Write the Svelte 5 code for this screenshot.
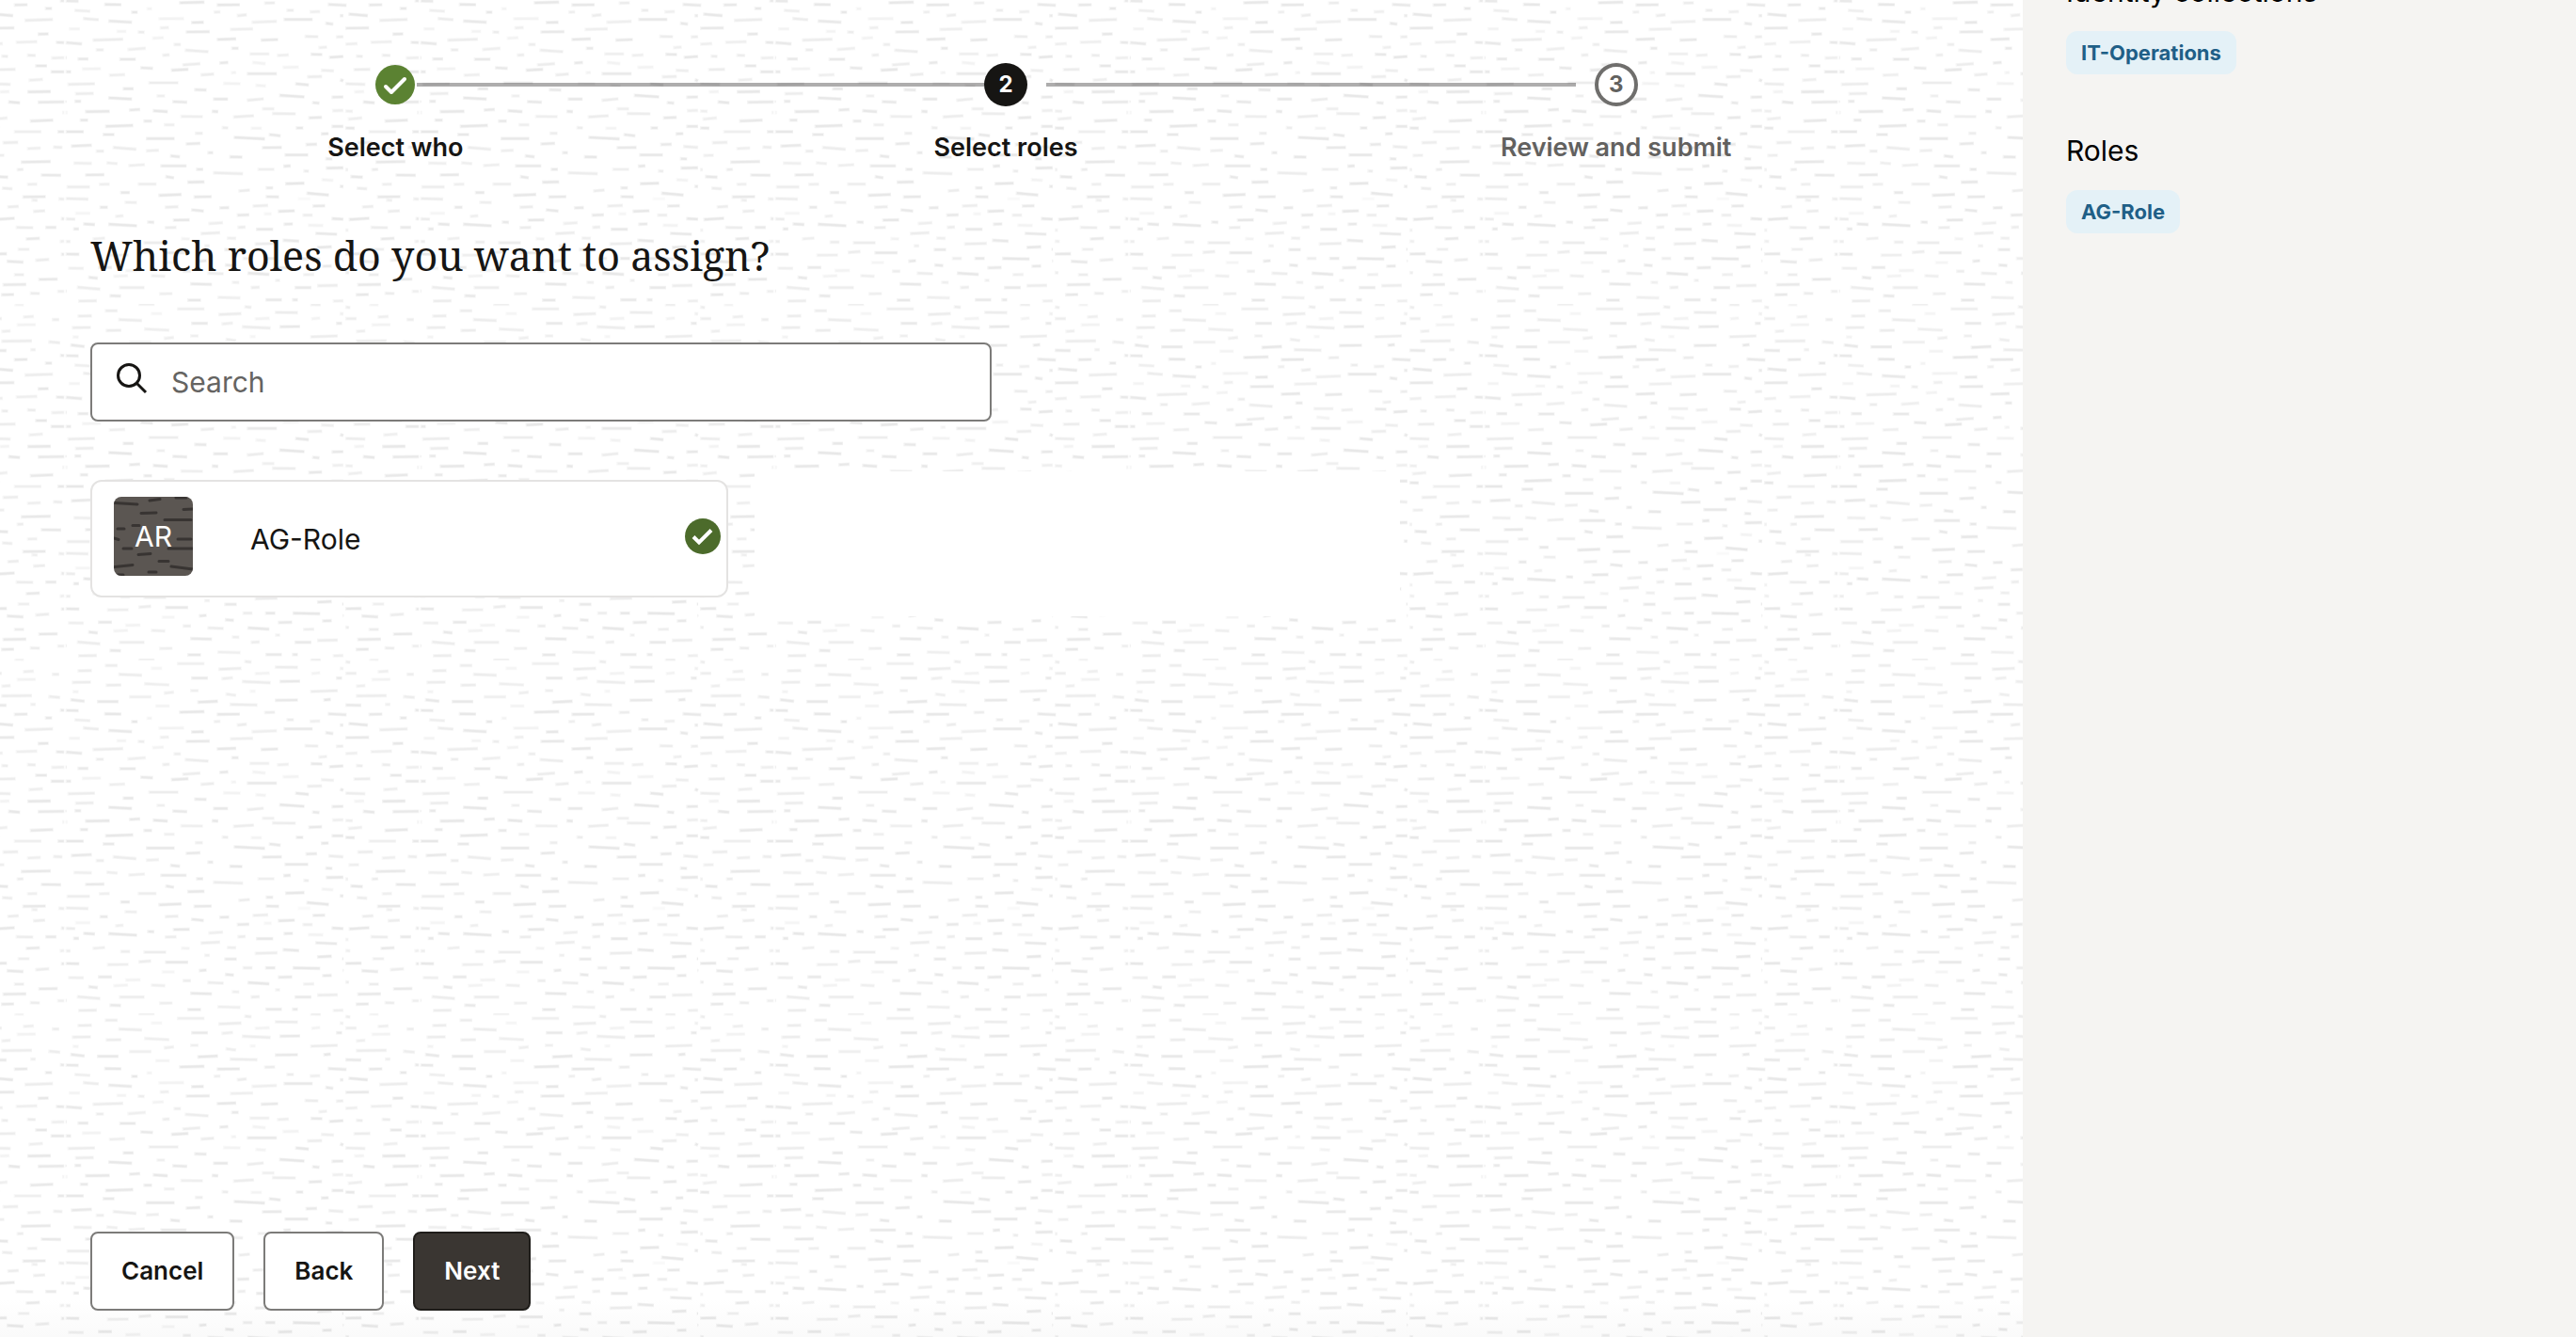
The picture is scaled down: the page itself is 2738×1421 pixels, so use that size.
<script lang="ts">
  type Dash = [number, number, number, number, number];

  // One tile of the woven backdrop, in thirds of a pixel:
  // start x, start y, end x, end y, strength (0-9)
  const tile = 1131;
  const rows: string[] = [
    '125,22,170,22,6 355,16,447,16,5 272,31,312,31,3 487,34,565,31,6 570,9,597,11,6 667,27,745,28,6 780,2,818,3,5 892,10,912,12,6 968,2,1002,3,4 232,1,288,1,5',
    '38,39,88,38,6 168,50,248,53,6 20,76,85,75,6 603,48,655,46,4 783,48,816,45,4 874,31,890,32,5 892,47,932,47,6 995,42,1034,40,5 1087,50,1115,50,6 400,62,458,62,7 497,64,538,61,5 862,62,886,62,7 975,67,1040,66,4',
    '128,85,182,84,6 250,80,335,84,5 562,73,658,77,6 682,73,752,72,7 926,88,960,86,5 22,105,46,106,4 313,110,350,107,5 397,102,428,102,5 587,104,610,104,3 780,105,872,102,6 510,113,548,117,5 926,119,1028,118,6 1076,121,1118,124,6',
    '202,122,278,122,5 15,131,65,136,7 100,137,173,137,8 286,151,336,151,4 420,139,490,136,8 523,146,616,148,6 667,133,745,132,7 822,132,850,130,8 1018,146,1040,146,5 892,148,947,149,7',
    '0,165,46,166,7 123,176,182,177,8 362,171,447,169,8 482,178,560,177,8 633,172,672,171,6 836,176,900,179,7 966,178,1014,177,7 1113,164,1131,165,7 258,190,280,190,4 28,195,83,198,5 209,201,234,201,8 472,201,498,200,5 704,195,732,195,6 778,200,816,199,5 1065,189,1092,189,7',
    '55,221,110,225,6 296,222,382,221,4 546,212,582,209,6 874,212,890,212,7 902,207,968,212,8 695,224,792,224,8 1000,227,1095,224,6 136,229,216,233,7 400,234,445,233,8 593,233,678,230,5 828,236,858,239,7',
    '10,254,50,254,4 300,251,334,250,5 524,256,602,254,5 892,252,972,251,7 162,262,198,262,4 230,264,256,265,6 383,264,464,263,7 1042,271,1081,270,8',
    '86,290,188,287,6 276,284,317,282,4 482,288,548,286,8 622,290,682,288,7 762,278,810,279,6 862,280,890,279,6 0,298,57,302,7 344,304,372,304,6 972,297,1045,295,5 892,303,935,301,5 1100,297,1131,298,7',
    '96,321,126,321,6 197,320,260,316,5 380,322,460,327,6 528,316,556,316,7 806,314,838,312,5 308,338,336,337,6 586,334,654,334,5 674,339,716,337,5 781,335,823,336,7 840,345,890,342,8 926,341,952,342,6 1008,338,1040,339,6 1085,347,1131,346,5',
    '0,346,8,346,6 38,350,77,350,7 171,351,228,351,7 372,369,434,365,6 490,363,523,361,7 595,361,642,365,4 692,377,748,376,4 1034,372,1076,372,8 52,382,117,381,4 238,378,283,380,7 336,386,396,383,8 814,386,860,388,5 918,384,976,383,6 0,391,22,391,7 1083,391,1131,391,8',
    '138,402,194,400,5 430,401,478,398,6 527,394,548,393,4 578,397,678,397,7 770,407,822,406,6 875,416,890,420,8 1013,418,1063,415,5 6,431,98,429,6 264,426,364,426,6 502,428,562,429,4 605,434,643,436,4 732,429,780,433,8 892,429,960,431,6',
    '182,445,221,445,8 410,448,454,449,7 920,455,956,454,4 1009,455,1088,454,8 30,461,94,460,6 290,468,321,468,5 136,474,216,478,8 470,478,522,478,8 578,482,636,477,6 681,466,766,471,8 848,472,890,471,7',
    '28,485,54,485,7 340,486,392,488,7 786,489,814,491,7 948,487,990,490,8 1042,488,1131,487,7 0,486,6,486,6 626,509,670,509,5 62,518,145,517,8 202,513,242,511,7 278,515,330,518,8 466,517,491,518,8 850,515,890,514,5 892,516,920,517,5 0,521,10,521,5 1120,521,1131,521,5',
    '658,524,738,525,6 366,533,442,534,5 534,535,605,531,6 774,538,822,536,7 900,542,950,538,5 45,545,76,545,7 248,548,280,548,7 1017,548,1096,545,7 313,560,352,560,5 126,565,220,562,8 848,565,890,565,8 892,570,926,571,8',
    '498,569,523,570,6 590,571,630,571,4 734,570,762,570,8 0,582,62,582,8 966,582,1058,582,5 1105,582,1131,582,7 118,591,160,591,7 412,587,442,587,6 648,591,690,595,7 814,589,843,588,8',
    '256,604,352,604,8 536,600,640,605,8 383,621,434,619,7 930,617,984,616,6 17,628,88,625,7 626,633,694,632,7 765,623,806,622,7 838,629,890,632,6 150,632,230,638,6 1008,636,1056,634,5 1091,631,1125,632,6 256,643,302,641,5 96,644,127,644,6 452,649,475,649,7',
    '333,659,369,662,7 522,662,568,663,8 698,656,778,656,8 828,668,855,669,7 902,658,940,657,5 25,682,88,683,5 130,681,170,684,5 200,690,257,687,5 302,691,390,691,7 988,679,1088,677,7 694,692,722,691,8',
    '416,702,443,702,7 612,702,670,702,5 830,698,890,697,8 892,703,905,703,6 975,703,1001,702,6 758,707,780,708,6 470,713,570,716,6 62,720,128,719,7 318,725,350,729,7 908,725,952,727,8 1052,720,1121,721,7 816,735,858,737,4',
    '388,743,447,742,8 106,750,145,749,5 230,749,294,749,6 700,748,766,746,8 1008,750,1045,749,5 3,758,82,758,6 638,761,666,761,7 874,756,890,757,8 928,762,966,764,6 551,771,592,768,6 174,776,209,776,8',
    '296,785,374,782,8 768,778,844,784,8 408,790,470,789,7 638,789,685,790,7 993,790,1072,789,7 0,795,77,797,6 740,796,785,796,2 1108,796,1131,797,6 188,807,232,808,5 1022,800,1046,801,5 108,823,139,823,7 316,823,364,821,6 596,819,650,817,6 787,819,832,818,7 490,825,526,824,7 945,822,986,820,6',
    '400,831,445,835,7 677,836,735,834,8 1027,836,1070,834,6 546,848,590,847,7 632,844,661,844,3 755,848,792,848,6 30,842,83,842,3 158,852,189,850,5 0,860,35,861,6 342,864,400,863,8 848,859,890,861,8 903,862,973,858,8 1116,859,1131,860,7',
    '56,876,98,878,8 260,870,287,871,7 455,875,506,872,5 695,877,729,876,7 136,877,232,882,8 773,880,826,881,4 316,888,358,887,6 548,887,578,886,6 24,892,47,892,8 607,893,666,893,8 972,887,1032,888,6 1066,887,1106,887,7 892,896,906,896,5',
    '430,907,497,904,6 796,906,870,909,7 86,924,130,921,5 368,923,400,924,4 514,921,548,922,5 1004,924,1053,922,7 0,932,20,932,6 692,928,749,931,7 174,934,210,934,6 248,936,325,936,6 892,931,912,932,5 1112,932,1131,931,5 603,940,680,938,6 442,946,464,946,5 802,951,853,949,8',
    '506,958,550,958,7 882,957,890,957,8 978,957,1020,957,5 232,967,277,964,6 0,972,48,973,8 317,968,395,968,8 892,972,948,971,8 1116,973,1131,973,8 132,976,205,975,5 564,986,600,986,6 636,986,673,986,8 724,986,816,988,8 425,995,454,993,7 306,999,352,999,3 884,994,890,994,6 943,995,1001,998,7 1034,992,1083,989,6',
    '508,1007,541,1009,7 818,1011,853,1010,7 8,1017,62,1018,5 103,1015,152,1015,7 677,1016,727,1015,7 190,1025,243,1024,4 373,1027,404,1027,6 892,1031,908,1032,6 452,1033,508,1035,6 580,1033,654,1037,8 757,1038,797,1037,5 966,1038,1003,1038,6 272,1041,322,1043,5 152,1043,203,1041,4 72,1046,107,1049,7',
    '1044,1053,1110,1052,7 530,1062,558,1063,5 668,1056,688,1056,5 397,1067,471,1069,7 802,1073,872,1072,6 930,1070,1010,1069,7 36,1078,115,1084,6 170,1079,256,1079,6 590,1079,623,1078,6 730,1079,788,1079,7 0,1090,8,1090,5 298,1099,345,1098,5 1104,1091,1131,1091,5',
    '140,1105,181,1106,7 484,1110,562,1112,5 925,1102,971,1101,7 1017,1097,1053,1098,6 388,1119,436,1119,7 637,1118,694,1118,7 722,1118,745,1118,7 40,1122,104,1121,6 852,1122,890,1121,5',
  ];
  const dashes: Dash[] = rows.flatMap((r) => r.split(' ').map((d) => d.split(',').map(Number) as Dash));

  let search = $state('');
  let picked = $state(true);
</script>

<svelte:head><title>Assign roles</title></svelte:head>

<div class="app">
  <main>
    <svg class="weave" aria-hidden="true">
      <defs>
        <pattern id="weave" x="1200" y="323" width="377" height="377" patternUnits="userSpaceOnUse" viewBox="0 0 {tile} {tile}">
          {#each dashes as [x1, y1, x2, y2, o]}
            <path d="M{x1 + 2} {y1}L{x2 - 2} {y2}" stroke="#000" stroke-opacity={o * 0.006} stroke-width="11" />
            <path d="M{x1 + 6} {y1}L{x2 - 4} {y2}" stroke="#000" stroke-opacity={o * 0.006} stroke-width="6" />
          {/each}
        </pattern>
      </defs>
      <rect width="100%" height="100%" fill="url(#weave)" />
    </svg>

    <ol class="train">
      <li class="done">
        <span class="dot">
          <svg viewBox="0 0 42 42" aria-hidden="true"><path d="M11 23L17 29L31 15" /></svg>
        </span>
        <span class="label">Select who</span>
      </li>
      <li class="current" aria-current="step">
        <span class="dot">2</span>
        <span class="label">Select roles</span>
      </li>
      <li class="todo">
        <span class="dot">3</span>
        <span class="label">Review and submit</span>
      </li>
    </ol>

    <h1>Which roles do you want to assign?</h1>

    <label class="search">
      <svg viewBox="0 0 34 34" aria-hidden="true"><circle cx="13" cy="14" r="11.5" /><path d="M21 22L31 32" /></svg>
      <input type="text" placeholder="Search" aria-label="Search" bind:value={search} />
    </label>

    <ul class="cards">
      <li>
        <button class="card" aria-pressed={picked} onclick={() => (picked = !picked)}>
          <span class="avatar">
            <svg viewBox="0 0 84 84" aria-hidden="true">
              <path d="M1 6.500L25 8M38 4L49 2.500M66 1H77M74 13.500L84 13M29 17.500L45 17M54 24.500H82M20 30.500H27M4 34H11M0 44L5 45.500M68 45H82M10 55H19M58 55H84M26 61.500L39 60.500M48 68.500H58M1 74.500L20 72.500M61 74L84 77M37 80H45M4 83H10" />
            </svg>
            <span>AR</span>
          </span>
          <span class="name">AG-Role</span>
          {#if picked}
            <svg class="tick" viewBox="0 0 38 38" aria-hidden="true"><circle cx="19" cy="19" r="19" /><path d="M9 19.500L15 25.500L28 12.500" /></svg>
          {/if}
        </button>
      </li>
      <li class="blank"></li>
    </ul>

    <footer>
      <button>Cancel</button>
      <button>Back</button>
      <button class="primary">Next</button>
    </footer>
  </main>

  <aside>
    <section>
      <h2>Identity collections</h2>
      <span class="badge">IT-Operations</span>
    </section>
    <section>
      <h2>Roles</h2>
      <span class="badge">AG-Role</span>
    </section>
  </aside>
</div>

<style>
  :global(body) {
    margin: 0;
    overflow: hidden;
  }
  .app {
    display: grid;
    grid-template-columns: minmax(0, 1fr) 588px;
    min-height: 100vh;
    overflow: hidden;
    font-family: Inter, 'Liberation Sans', sans-serif;
    color: #161513;
  }
  main {
    position: relative;
    box-sizing: border-box;
    display: flex;
    flex-direction: column;
    padding: 66px 108px 28px 96px;
    background: linear-gradient(to top, #fafafa, #fff 40px);
  }
  main > :not(.weave) {
    position: relative;
  }
  .weave {
    position: absolute;
    inset: 0;
    width: 100%;
    height: 100%;
  }
  .train {
    display: grid;
    grid-template-columns: repeat(3, 1fr);
    margin: 0;
    padding: 0;
    list-style: none;
  }
  .train li {
    position: relative;
    display: flex;
    flex-direction: column;
    align-items: center;
    gap: 26px;
    font-size: 27px;
    line-height: 36px;
    font-weight: 600;
  }
  .train li + li::before {
    content: '';
    position: absolute;
    top: 22px;
    left: calc(-50% + 23px);
    right: calc(50% + 23px);
    height: 4px;
    background: rgba(22, 21, 19, 0.35);
  }
  .train .todo::before {
    left: calc(-50% + 43px);
    right: calc(50% + 43px);
  }
  .dot {
    box-sizing: border-box;
    display: flex;
    align-items: center;
    justify-content: center;
    width: 46px;
    height: 46px;
    margin-top: 1px;
    border-radius: 50%;
    font-size: 24px;
    font-weight: 700;
  }
  .done .dot {
    width: 42px;
    height: 42px;
    margin: 3px 0 2px;
    background: #5b8232;
  }
  .dot svg {
    width: 42px;
    height: 42px;
    fill: none;
    stroke: #fff;
    stroke-width: 4;
    stroke-linecap: round;
    stroke-linejoin: round;
  }
  .current .dot {
    background: #161513;
    color: #fff;
  }
  .todo .dot {
    border: 4px solid #6f6e6c;
    background: #fff;
  }
  .todo {
    color: #62615f;
  }
  h1 {
    margin: 69px 0 0;
    font: 400 43px/56px Georgia, 'Noto Serif', 'Liberation Serif', serif;
  }
  .search {
    box-sizing: border-box;
    display: flex;
    align-items: center;
    gap: 24px;
    width: 958px;
    max-width: 100%;
    height: 84px;
    margin-top: 64px;
    padding: 0 26px;
    border: 2px solid #7c7b79;
    border-radius: 8px;
    background: #fff;
  }
  .search svg {
    width: 34px;
    height: 34px;
    margin-bottom: 8px;
    overflow: visible;
    fill: none;
    stroke: #161513;
    stroke-width: 3;
  }
  input {
    flex: 1;
    padding: 0;
    border: 0;
    outline: 0;
    background: none;
    font: 400 30px/40px Inter, sans-serif;
    color: #161513;
  }
  input::placeholder {
    color: #656462;
    opacity: 1;
  }
  .cards {
    display: flex;
    gap: 28px;
    margin: 53px 0 0;
    padding: 0;
    list-style: none;
  }
  .cards li {
    margin: 9px 0 20px;
  }
  .cards .blank {
    width: 686px;
    margin: 0;
    background: #fff;
  }
  .card {
    display: flex;
    align-items: center;
    box-sizing: border-box;
    width: 678px;
    height: 125px;
    padding: 0 6px 6px 23px;
    border: 2px solid #e4e3e2;
    border-radius: 12px;
    background: #fff;
    text-align: left;
  }
  .avatar {
    display: grid;
    place-items: center;
    width: 84px;
    height: 84px;
    margin-right: 61px;
    border-radius: 8px;
    overflow: hidden;
    background: #5b5652;
    color: #fff;
    font-size: 30px;
    line-height: 36px;
  }
  .avatar > * {
    grid-area: 1 / 1;
  }
  .avatar svg {
    width: 84px;
    height: 84px;
    fill: none;
    stroke: #2c2a28;
    stroke-opacity: 0.75;
    stroke-width: 3;
    stroke-linecap: round;
  }
  .name {
    flex: 1;
    padding-top: 6px;
    font-size: 30px;
    line-height: 36px;
  }
  .tick {
    width: 38px;
    height: 38px;
    fill: #4c6b2b;
  }
  .tick path {
    fill: none;
    stroke: #fff;
    stroke-width: 4;
  }
  button {
    font-family: inherit;
    color: inherit;
    cursor: pointer;
  }
  footer {
    display: flex;
    gap: 31px;
    margin-top: auto;
  }
  footer button {
    height: 84px;
    padding: 0 31px;
    border: 2px solid #7c7b79;
    border-radius: 8px;
    background: #fff;
    font-size: 26px;
    line-height: 36px;
    font-weight: 600;
  }
  footer .primary {
    border-color: #1f1d1a;
    background: #3a3632;
    color: #fff;
  }
  aside {
    display: flex;
    flex-direction: column;
    gap: 61px;
    box-sizing: border-box;
    height: 100%;
    padding: 0 46px;
    background: #f5f4f2;
  }
  section {
    display: flex;
    flex-direction: column;
    align-items: flex-start;
    gap: 22px;
  }
  section:first-child {
    margin-top: -29px;
  }
  h2 {
    margin: 0;
    font-size: 30px;
    line-height: 40px;
    font-weight: 400;
    color: #000;
  }
  .badge {
    padding: 5px 16px;
    border-radius: 12px;
    background: #e4f1f7;
    color: #1f5f87;
    font-size: 22px;
    line-height: 36px;
    font-weight: 700;
  }
</style>
